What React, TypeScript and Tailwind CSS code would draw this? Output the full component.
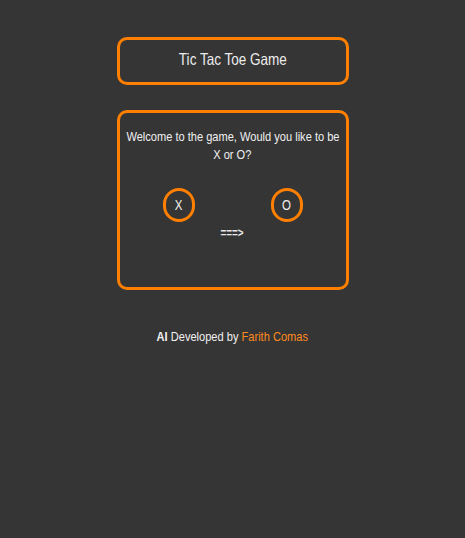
import React from 'react';

const font = { fontFamily: '"Liberation Sans", Arial, sans-serif' };

// no narrow face is installed, so squeeze Liberation Sans horizontally
const Narrow = ({ children, className = '' }: { children: React.ReactNode; className?: string }) => (
  <span className={`inline-block scale-x-[0.82] origin-center whitespace-nowrap ${className}`}>{children}</span>
);

export default function App() {
  return (
    <div className="min-h-[538px] w-full bg-[#353535] flex flex-col items-center pt-[37px]" style={font}>
      <div className="w-[232px] h-[48px] border-[3px] border-[#ff7f00] rounded-[10px] flex items-center justify-center pb-[4px]">
        <h1 className="text-[16.5px] text-[#ececec]">
          <Narrow>Tic Tac Toe Game</Narrow>
        </h1>
      </div>

      <div className="mt-[25px] w-[232px] h-[180px] border-[3px] border-[#ff7f00] rounded-[10px] flex flex-col items-center pt-[15px]">
        <p className="text-[13.5px] leading-[18px] text-[#f0f0f0] text-center flex flex-col items-center">
          <Narrow>Welcome to the game, Would you like to be</Narrow>
          <Narrow>X or O?</Narrow>
        </p>
        <div className="mt-[24px] flex justify-center gap-[76px]">
          <button className="w-[32px] h-[34px] shrink-0 rounded-full border-[3px] border-[#ff7f00] text-[14px] text-[#f0f0f0] flex items-center justify-center">
            <Narrow>X</Narrow>
          </button>
          <button className="w-[32px] h-[34px] shrink-0 rounded-full border-[3px] border-[#ff7f00] text-[14px] text-[#f0f0f0] flex items-center justify-center">
            <Narrow>O</Narrow>
          </button>
        </div>
        <div className="mt-[2px] text-[12px] font-bold text-[#e8e8e8]">
          <Narrow>===&gt;</Narrow>
        </div>
      </div>

      <p className="mt-[37px] text-[13.5px] text-[#f0f0f0]">
        <Narrow>
          <span className="font-bold">AI</span> Developed by <span className="text-[#ff8a1e]">Farith Comas</span>
        </Narrow>
      </p>
    </div>
  );
}
